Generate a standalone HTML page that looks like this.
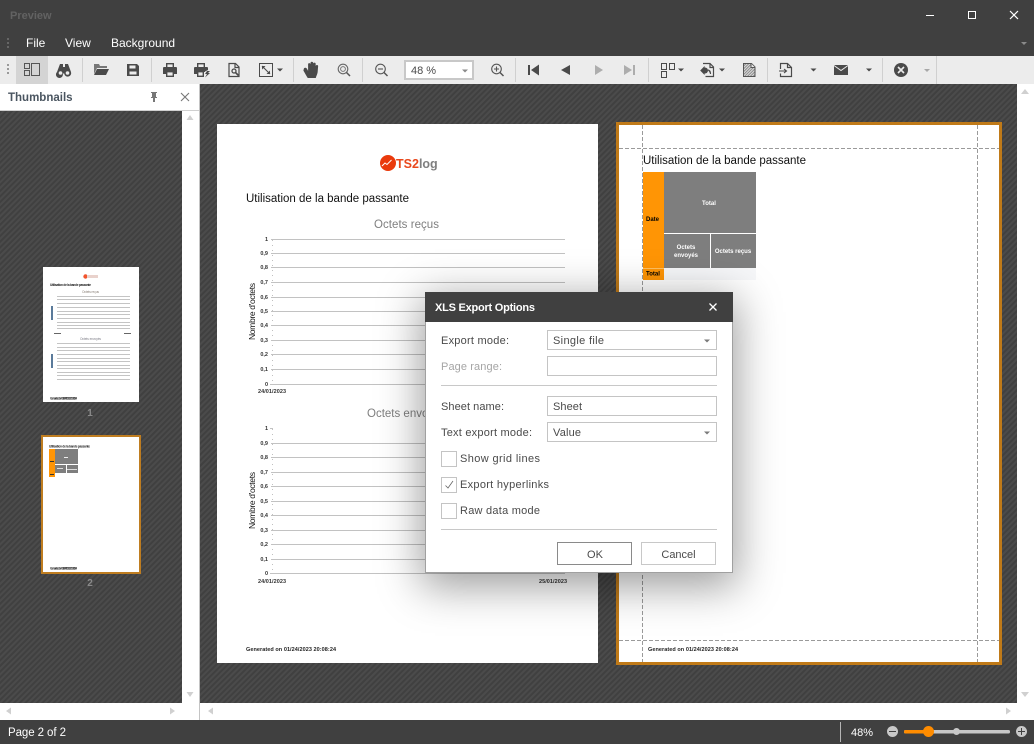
<!DOCTYPE html>
<html><head><meta charset="utf-8"><title>Preview</title>
<style>
html,body{margin:0;padding:0;background:#404040;width:1034px;height:744px;overflow:hidden}
svg{display:block;font-family:"Liberation Sans",sans-serif;position:absolute;left:0;top:0}
#shadow{position:absolute;left:425px;top:292px;width:308px;height:281px;box-shadow:0 10px 40px 4px rgba(0,0,0,.38)}
.c{shape-rendering:crispEdges}
.ic{fill:#4a4a4a}
.st{fill:none;stroke:#4a4a4a;stroke-width:1.2}
.l{font-size:11px;fill:#4a4a4a}
.gl{stroke:#c2c2c2;stroke-width:1;shape-rendering:crispEdges}
.n{font-size:5.5px;font-weight:bold;fill:#333}
.sm{font-size:5.5px;font-weight:bold;fill:#222}
.tw{font-size:6px;font-weight:bold;fill:#fff}
.t3{font-size:3.2px;font-weight:bold;fill:#222}
</style></head><body>
<svg xmlns="http://www.w3.org/2000/svg" width="1034" height="744" viewBox="0 0 1034 744">
<defs>
<pattern id="h" width="4" height="4" patternUnits="userSpaceOnUse" patternTransform="rotate(45)">
<rect width="4" height="4" fill="#404040"/><rect width="2" height="4" fill="#4b4b4b"/>
</pattern>
<pattern id="w" width="2" height="2" patternUnits="userSpaceOnUse" patternTransform="rotate(45)">
<rect width="2" height="2" fill="#dcdcdc"/><rect width="1" height="2" fill="#8c8c8c"/>
</pattern>
<g id="darr"><path d="M0 .5h6l-3 3z"/></g>
</defs>

<!-- title + menu -->
<rect class="c" width="1034" height="56" fill="#404040"/>
<text x="10" y="19" font-size="11" font-weight="bold" fill="#626262">Preview</text>
<rect class="c" x="926" y="15" width="8" height="1" fill="#fff"/>
<rect class="c" x="968.500" y="11.500" width="7" height="7" fill="none" stroke="#fff" stroke-width="1"/>
<path d="M1010 11l8 8M1018 11l-8 8" stroke="#fff" stroke-width="1.200" fill="none"/>
<g fill="#666" class="c"><rect x="7" y="38" width="2" height="2"/><rect x="7" y="42" width="2" height="2"/><rect x="7" y="46" width="2" height="2"/></g>
<text x="26" y="47" font-size="12" fill="#fff">File</text>
<text x="65" y="47" font-size="12" fill="#fff">View</text>
<text x="111" y="47" font-size="12" fill="#fff">Background</text>
<use href="#darr" x="1021" y="41.500" fill="#8a8a8a"/>

<!-- toolbar -->
<rect class="c" y="56" width="1034" height="28" fill="#ececec"/>
<rect class="c" x="16" y="56" width="32" height="28" fill="#d4d4d4"/>
<g fill="#9a9a9a" class="c"><rect x="7" y="64" width="2" height="2"/><rect x="7" y="68" width="2" height="2"/><rect x="7" y="72" width="2" height="2"/></g>
<g fill="#d0d0d0" class="c">
<rect x="82" y="58" width="1" height="24"/><rect x="151" y="58" width="1" height="24"/><rect x="293" y="58" width="1" height="24"/><rect x="362" y="58" width="1" height="24"/><rect x="515" y="58" width="1" height="24"/><rect x="648" y="58" width="1" height="24"/><rect x="767" y="58" width="1" height="24"/><rect x="882" y="58" width="1" height="24"/><rect x="936" y="56" width="1" height="28"/>
</g>
<!-- layout toggle -->
<g class="c" fill="none" stroke="#555" stroke-width="1">
<rect x="24.500" y="63.500" width="5" height="5"/><rect x="24.500" y="70.500" width="5" height="5"/><rect x="31.500" y="63.500" width="8" height="12"/>
</g>
<!-- binoculars -->
<path class="ic" d="M60 64h3v3h2v-3h3l3 8a3.500 3.500 0 1 1-6.800 1.500h-1.400A3.500 3.500 0 1 1 57 72z"/>
<circle cx="60.500" cy="73" r="1.800" fill="#ececec"/><circle cx="67.500" cy="73" r="1.800" fill="#ececec"/>
<!-- folder -->
<path fill="#777" d="M94 64h5l1 2h7v2h-10l-3 6z"/>
<path class="ic" d="M97 69h12l-3 6H94z"/>
<!-- save -->
<path class="ic" d="M127 64h10l2 2v10h-12zM129.500 65.500v3h6v-3zM129.500 71.500v3h7v-3z"/>
<!-- print -->
<rect x="166.700" y="63.700" width="6.600" height="4" fill="none" stroke="#4a4a4a" stroke-width="1.400"/>
<path class="ic" d="M163 68q0-1 1-1h12q1 0 1 1v6h-3v-2h-8v2h-3z"/>
<rect x="166.700" y="71.700" width="6.600" height="4.600" fill="#ececec" stroke="#4a4a4a" stroke-width="1.400"/>
<!-- print 2 -->
<rect x="197.700" y="63.700" width="6.600" height="4" fill="none" stroke="#4a4a4a" stroke-width="1.400"/>
<path class="ic" d="M194 68q0-1 1-1h12q1 0 1 1v2l-3 1.500v.5h-8v2h-3z"/>
<rect x="197.700" y="71.700" width="5.600" height="4.600" fill="#ececec" stroke="#4a4a4a" stroke-width="1.400"/>
<path fill="#4a4a4a" d="M207 71l-2 3h2l-2 3.500 5-4.500h-2l2-2z"/>
<!-- page setup -->
<path class="st" d="M229 63.500h6.500l3.500 3.500v9.500h-10z"/>
<path class="st" d="M235 63.500v4h4"/>
<circle cx="234" cy="71" r="2" fill="none" stroke="#4a4a4a" stroke-width="1.300"/>
<path d="M235.500 72.500l3 3" stroke="#4a4a4a" stroke-width="1.600"/>
<!-- expand -->
<rect class="c" x="259.500" y="63.500" width="13" height="13" fill="none" stroke="#4a4a4a"/>
<path d="M262 66l8 8" stroke="#4a4a4a" stroke-width="1.100"/>
<path class="ic" d="M262 66h3.500l-3.500 3.500zM270 74h-3.500l3.500-3.500z"/>
<use href="#darr" x="277" y="68" fill="#4a4a4a"/>
<!-- hand -->
<path class="ic" transform="translate(304 62) scale(1.240 1.140) translate(-304 -63)" d="M304 68.500c.8-.8 1.800-.5 2.300.3l1 2V65c0-1.300 1.800-1.300 2 0v2-3.200c0-1.300 2-1.300 2.100 0V67v-2.500c.1-1.300 2-1.300 2 0V68v-1.500c.2-1.200 2-1.200 2 0l-.4 5.500c-.3 2-1 3-1.500 5h-6.500c-.9-1.500-3-5.500-3.500-6.500z"/>
<!-- zoom ring -->
<circle cx="343" cy="69" r="4.800" fill="none" stroke="#666" stroke-width="1.100"/>
<circle cx="343" cy="69" r="2.400" fill="none" stroke="#777" stroke-width="1"/>
<path d="M346.500 72.500l3.500 3.500" stroke="#555" stroke-width="1.500"/>
<!-- zoom out -->
<circle cx="380.500" cy="69" r="4.800" fill="none" stroke="#555" stroke-width="1.100"/>
<path d="M378 69h5" stroke="#555" stroke-width="1.100"/>
<path d="M384 72.500l3.500 3.500" stroke="#555" stroke-width="1.500"/>
<!-- combo -->
<rect class="c" x="405" y="61" width="68" height="18" fill="#fff" stroke="#c8c8c8" stroke-width="2"/>
<text x="411" y="74" font-size="11" fill="#4a4a4a">48 %</text>
<use href="#darr" x="462" y="69" fill="#8a8a8a"/>
<!-- zoom in -->
<circle cx="496.500" cy="69" r="4.800" fill="none" stroke="#555" stroke-width="1.100"/>
<path d="M494 69h5M496.500 66.500v5" stroke="#555" stroke-width="1.100"/>
<path d="M500 72.500l3.500 3.500" stroke="#555" stroke-width="1.500"/>
<!-- nav -->
<path class="ic" d="M528 65h2v10h-2zM539 64.500v11l-8-5.500z"/>
<path class="ic" d="M570 65v10l-9-5z"/>
<path fill="#adadad" d="M595 65v10l8-5z"/>
<path fill="#adadad" d="M624 65v10l8-5zM633 65h2v10h-2z"/>
<!-- pages layout -->
<g class="c" fill="none" stroke="#4a4a4a"><rect x="661.500" y="63.500" width="5" height="6"/><rect x="669.500" y="63.500" width="5" height="6"/><rect x="661.500" y="71.500" width="5" height="6"/></g>
<use href="#darr" x="678" y="68" fill="#4a4a4a"/>
<!-- export doc -->
<path class="st" d="M703 63.500h7l3.500 3.500v9.500h-8"/>
<path class="st" d="M710 63.500v4h3.500"/>
<circle cx="705" cy="70.500" r="3" fill="#4a4a4a"/>
<path d="M701 70.500l3-3v6zM708 70c2 .3 2.500 1.500 2.500 4" stroke="#4a4a4a" fill="#4a4a4a" stroke-width="1.200"/>
<use href="#darr" x="719" y="68" fill="#4a4a4a"/>
<!-- watermark -->
<path fill="url(#w)" d="M743.500 63.500h8l3.500 3.500v9.500h-11.500z" stroke="#555" stroke-width="1"/>
<path d="M751 63.500v4h4" fill="#ececec" stroke="#555" stroke-width="1"/>
<!-- export -->
<path class="st" d="M780.500 69v-5.500h7l4 4v9h-11v-3"/>
<path class="st" d="M787.500 63.500v4h4"/>
<path d="M779 71h7M784 69l2.500 2-2.500 2" stroke="#4a4a4a" stroke-width="1.100" fill="none"/>
<use href="#darr" x="810.500" y="68" fill="#4a4a4a"/>
<!-- mail -->
<rect class="c" x="834" y="65" width="14" height="10" fill="#4a4a4a"/>
<path d="M834 65.500l7 5 7-5" fill="none" stroke="#ececec" stroke-width="1"/>
<use href="#darr" x="866" y="68" fill="#4a4a4a"/>
<!-- close circle -->
<circle cx="901" cy="70" r="7" fill="#4a4a4a"/>
<path d="M898 67l6 6M904 67l-6 6" stroke="#ececec" stroke-width="1.600"/>
<use href="#darr" x="924" y="68.500" fill="#a8a8a8"/>

<!-- sidebar -->
<rect class="c" y="84" width="199" height="636" fill="#fff"/>
<rect class="c" y="110" width="199" height="1" fill="#d0d0d0"/>
<text x="8" y="101" font-size="11.500" font-weight="bold" fill="#4a5560">Thumbnails</text>
<path fill="#777" class="c" d="M151 92h6v1h-1v4h1v1h-2v4h-2v-4h-2v-1h1v-4h-1z"/>
<path d="M181 93l8 8M189 93l-8 8" stroke="#777" stroke-width="1.100"/>
<rect class="c" y="111" width="182" height="592" fill="url(#h)"/>
<rect class="c" x="199" y="84" width="1" height="636" fill="#c4c4c4"/>
<path fill="#d0d0d0" d="M186.500 120l3.500-5 3.500 5zM186.500 692l3.500 5 3.500-5zM11 707.500v7l-5-3.500zM170 707.500v7l5-3.500z"/>

<!-- thumb 1 -->
<rect class="c" x="43" y="267" width="96" height="135" fill="#fff"/>
<circle cx="85.500" cy="276.500" r="2.200" fill="#f2542d"/><rect class="c" x="87" y="275" width="11" height="3" fill="#e9d2cc"/>
<text x="50" y="286" class="t3" textLength="41">Utilisation de la bande passante</text>
<text x="82" y="293" class="t3" style="fill:#8a8078;font-weight:normal" textLength="17">Octets reçus</text>
<text x="80" y="340" class="t3" style="fill:#80808a;font-weight:normal" textLength="21">Octets envoyés</text>
<rect class="c" x="51" y="306" width="2" height="14" fill="#5a7a9a"/><rect class="c" x="51" y="354" width="2" height="14" fill="#5a7a9a"/>
<g fill="#c4c4c4" class="c">
<rect x="57" y="296" width="73" height="1"/><rect x="57" y="299" width="73" height="1"/><rect x="57" y="303" width="73" height="1"/><rect x="57" y="307" width="73" height="1"/><rect x="57" y="311" width="73" height="1"/><rect x="57" y="314" width="73" height="1"/><rect x="57" y="318" width="73" height="1"/><rect x="57" y="322" width="73" height="1"/><rect x="57" y="325" width="73" height="1"/><rect x="57" y="328" width="73" height="1"/>
<rect x="57" y="343" width="73" height="1"/><rect x="57" y="347" width="73" height="1"/><rect x="57" y="350" width="73" height="1"/><rect x="57" y="354" width="73" height="1"/><rect x="57" y="358" width="73" height="1"/><rect x="57" y="361" width="73" height="1"/><rect x="57" y="365" width="73" height="1"/><rect x="57" y="368" width="73" height="1"/><rect x="57" y="372" width="73" height="1"/><rect x="57" y="375" width="73" height="1"/><rect x="57" y="379" width="73" height="1"/>
</g>
<rect class="c" x="54" y="333" width="7" height="1" fill="#666"/><rect class="c" x="124" y="333" width="7" height="1" fill="#666"/>
<text x="50" y="399.500" class="t3" textLength="27">Generated on 01/24/2023 20:08:24</text>
<text x="90" y="416" font-size="10" font-weight="bold" fill="#8a8a8a" text-anchor="middle">1</text>

<!-- thumb 2 -->
<rect class="c" x="42" y="436" width="98" height="137" fill="#fff" stroke="#bf7d20" stroke-width="2"/>
<text x="49" y="447.500" class="t3" textLength="41">Utilisation de la bande passante</text>
<rect class="c" x="49" y="449" width="6" height="28" fill="#ff9505"/>
<rect class="c" x="55" y="449" width="23" height="15" fill="#7e7e7e"/>
<rect class="c" x="55" y="465" width="11" height="8" fill="#7e7e7e"/><rect class="c" x="67" y="465" width="11" height="8" fill="#7e7e7e"/>
<rect class="c" x="64" y="457" width="4" height="1" fill="#eee"/>
<rect class="c" x="57" y="468" width="6" height="1" fill="#ddd"/><rect class="c" x="67" y="469" width="10" height="1" fill="#ddd"/>
<rect class="c" x="50" y="461" width="4" height="1" fill="#333"/><rect class="c" x="50" y="474" width="4" height="1" fill="#333"/>
<text x="50" y="569.500" class="t3" textLength="27">Generated on 01/24/2023 20:08:24</text>
<text x="90" y="586" font-size="10" font-weight="bold" fill="#8a8a8a" text-anchor="middle">2</text>

<!-- main -->
<rect class="c" x="200" y="84" width="817" height="619" fill="url(#h)"/>
<rect class="c" x="1017" y="84" width="17" height="636" fill="#fff"/>
<rect class="c" x="200" y="703" width="834" height="17" fill="#fff"/>
<path fill="#d0d0d0" d="M1021 94l4-5 4 5zM1021 692l4 5 4-5zM213 707.500v7l-5-3.500zM1006 707.500v7l5-3.500z"/>

<!-- page 1 -->
<rect class="c" x="217" y="124" width="381" height="539" fill="#fff"/>
<circle cx="388" cy="163" r="8" fill="#ea3a0c"/>
<path d="M382 166l3-3 2 1.500 4.500-4.500" fill="none" stroke="#fff" stroke-width="1"/>
<text x="396" y="168" font-size="12.500" font-weight="bold"><tspan fill="#e9481c">TS2</tspan><tspan fill="#7f7f7f">log</tspan></text>
<text x="246" y="202" font-size="11.500" fill="#111" textLength="163">Utilisation de la bande passante</text>
<text x="374" y="228" font-size="11.500" fill="#7f7f7f" textLength="65">Octets reçus</text>
<g class="gl">
<path d="M271 239.500H565M271 253.500H565M271 267.500H565M271 282.500H565M271 297.500H565M271 311.500H565M271 325.500H565M271 340.500H565M271 354.500H565M271 369.500H565M270 384.500H565"/>
<path d="M270 428.500H273M271 443.500H565M271 457.500H565M271 472.500H565M271 486.500H565M271 501.500H565M271 515.500H565M271 530.500H565M271 544.500H565M271 559.500H565M270 573.500H565"/>
</g>
<path d="M272.500 240V384M272.500 429V573" stroke="#c0c0c0" stroke-dasharray="1 4" shape-rendering="crispEdges"/>
<g class="n" text-anchor="end">
<text x="268" y="241">1</text><text x="268" y="255">0,9</text><text x="268" y="269">0,8</text><text x="268" y="284">0,7</text><text x="268" y="299">0,6</text><text x="268" y="313">0,5</text><text x="268" y="327">0,4</text><text x="268" y="342">0,3</text><text x="268" y="356">0,2</text><text x="268" y="371">0,1</text><text x="268" y="386">0</text>
<text x="268" y="430">1</text><text x="268" y="445">0,9</text><text x="268" y="459">0,8</text><text x="268" y="474">0,7</text><text x="268" y="488">0,6</text><text x="268" y="503">0,5</text><text x="268" y="517">0,4</text><text x="268" y="532">0,3</text><text x="268" y="546">0,2</text><text x="268" y="561">0,1</text><text x="268" y="575">0</text>
</g>
<text x="258" y="393" class="n" textLength="28">24/01/2023</text>
<text x="258" y="583" class="n" textLength="28">24/01/2023</text>
<text x="539" y="583" class="n" textLength="28">25/01/2023</text>
<text transform="translate(255 340) rotate(-90)" font-size="8.500" fill="#111" textLength="57">Nombre d'octets</text>
<text transform="translate(255 529) rotate(-90)" font-size="8.500" fill="#111" textLength="57">Nombre d'octets</text>
<text x="367" y="417" font-size="11.500" fill="#7f7f7f">Octets envoyés</text>
<text x="246" y="651" class="sm" textLength="90">Generated  on 01/24/2023  20:08:24</text>

<!-- page 2 -->
<rect class="c" x="617.500" y="123.500" width="383" height="540" fill="#fff" stroke="#c07a18" stroke-width="3"/>
<g stroke="#9a9a9a" stroke-dasharray="4 2" shape-rendering="crispEdges">
<path d="M642.500 125V662M977.500 125V662M619 148.500H999M619 640.500H999"/>
</g>
<text x="643" y="164" font-size="11.500" fill="#111" textLength="163">Utilisation de la bande passante</text>
<g class="c">
<rect x="643" y="172" width="21" height="108" fill="#ff9505"/>
<rect x="664" y="172" width="92" height="61" fill="#7e7e7e"/>
<rect x="664" y="234" width="46" height="34" fill="#7e7e7e"/>
<rect x="711" y="234" width="45" height="34" fill="#7e7e7e"/>
<rect x="664" y="268" width="92" height="12" fill="#f6f7f9"/>
<rect x="643" y="268" width="21" height="1" fill="#ffc060"/>
</g>
<text x="646" y="221" class="sm" style="font-size:6px;fill:#000">Date</text>
<text x="646" y="275.500" class="sm" style="font-size:6px;fill:#000">Total</text>
<text x="709" y="205" class="tw" text-anchor="middle">Total</text>
<text x="686" y="249" class="tw" text-anchor="middle">Octets</text>
<text x="686" y="257" class="tw" text-anchor="middle">envoyés</text>
<text x="733" y="253" class="tw" text-anchor="middle">Octets reçus</text>
<text x="648" y="651" class="sm" textLength="90">Generated  on 01/24/2023  20:08:24</text>

<!-- status bar -->
<rect class="c" y="720" width="1034" height="24" fill="#404040"/>
<text x="8" y="736" font-size="11.500" fill="#fff" textLength="58">Page 2 of 2</text>
<rect class="c" x="840" y="722" width="1" height="20" fill="#b5b5b5"/>
<text x="851" y="736" font-size="11" fill="#fff" textLength="22">48%</text>
<circle cx="892.500" cy="731.500" r="5.500" fill="#c8c8c8"/>
<rect class="c" x="889" y="731" width="7" height="1" fill="#404040"/>
<rect x="904" y="730" width="106" height="3.500" rx="1.500" fill="#c8c8c8"/>
<rect x="904" y="730" width="24" height="3.500" rx="1.500" fill="#ff8c00"/>
<circle cx="956.500" cy="731.500" r="3.500" fill="#c8c8c8"/>
<circle cx="928.500" cy="731.500" r="5.500" fill="#ff8c00"/>
<circle cx="1021.500" cy="731.500" r="5.500" fill="#c8c8c8"/>
<path class="c" fill="#404040" d="M1018 731h7v1h-7zM1021 728h1v7h-1z"/>
</svg>

<div id="shadow"></div>

<svg xmlns="http://www.w3.org/2000/svg" width="1034" height="744" viewBox="0 0 1034 744">
<defs><g id="darr2"><path d="M0 .5h6l-3 3z"/></g></defs>
<!-- dialog -->
<rect class="c" x="425" y="292" width="308" height="281" fill="#fff"/>
<rect class="c" x="425.500" y="292.500" width="307" height="280" fill="none" stroke="#a0a0a0"/>
<rect class="c" x="425" y="292" width="308" height="30" fill="#404040"/>
<text x="435" y="311" font-size="11" font-weight="bold" fill="#fff" textLength="100">XLS Export Options</text>
<path d="M709.500 303.500l7 7M716.500 303.500l-7 7" stroke="#fff" stroke-width="1.300"/>

<text class="l" x="441" y="344" textLength="68">Export mode:</text>
<text class="l" x="441" y="370" textLength="61" style="fill:#a5a5a5">Page range:</text>
<text class="l" x="441" y="410" textLength="63">Sheet name:</text>
<text class="l" x="441" y="436" textLength="91">Text export mode:</text>
<g class="c" fill="#fff" stroke="#c4c4c4">
<rect x="547.500" y="330.500" width="169" height="19"/>
<rect x="547.500" y="356.500" width="169" height="19"/>
<rect x="547.500" y="396.500" width="169" height="19"/>
<rect x="547.500" y="422.500" width="169" height="19"/>
<rect x="441.500" y="451.500" width="15" height="15"/>
<rect x="441.500" y="477.500" width="15" height="15"/>
<rect x="441.500" y="503.500" width="15" height="15"/>
</g>
<text class="l" x="553" y="344" textLength="51">Single file</text>
<text class="l" x="553" y="410" textLength="29">Sheet</text>
<text class="l" x="553" y="436" textLength="28">Value</text>
<use href="#darr2" x="704" y="339" fill="#7a7a7a"/>
<use href="#darr2" x="704" y="431" fill="#7a7a7a"/>
<g class="c" fill="#c8c8c8"><rect x="441" y="385" width="276" height="1"/><rect x="441" y="529" width="276" height="1"/></g>
<text class="l" x="460" y="462" textLength="80">Show grid lines</text>
<path d="M445.500 485.500l2.500 2.500 5-7" fill="none" stroke="#666" stroke-width=".8"/>
<text class="l" x="460" y="488" textLength="89">Export hyperlinks</text>
<text class="l" x="460" y="514" textLength="80">Raw data mode</text>
<rect class="c" x="557.500" y="542.500" width="74" height="22" fill="#fff" stroke="#8a8a8a"/>
<text class="l" x="595" y="558" text-anchor="middle">OK</text>
<rect class="c" x="641.500" y="542.500" width="74" height="22" fill="#fff" stroke="#c8c8c8"/>
<text class="l" x="678.500" y="558" text-anchor="middle">Cancel</text>
</svg>
</body></html>
